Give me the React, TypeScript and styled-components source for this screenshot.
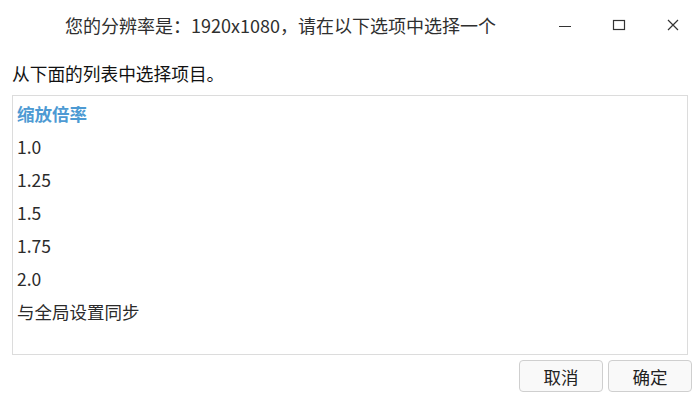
import React from "react";
import styled, { createGlobalStyle } from "styled-components";

const GlobalStyle = createGlobalStyle`
  html, body {
    margin: 0;
    padding: 0;
    background: #ffffff;
  }
  body {
    font-family: "Noto Sans CJK SC", "Noto Sans", sans-serif;
    color: #2b2b2b;
  }
`;

const Window = styled.div`
  box-sizing: border-box;
  width: 700px;
  height: 400px;
  display: flex;
  flex-direction: column;
  background: #fff;
  border-radius: 4px;
  overflow: hidden;
`;

const TitleBar = styled.div`
  height: 52px;
  display: flex;
  align-items: center;
  padding-left: 65px;
  padding-bottom: 2px;
  box-sizing: border-box;
`;

const Title = styled.div`
  flex: 1;
  font-size: 18px;
  color: #2f2f2f;
`;

const Controls = styled.div`
  display: flex;
  align-items: center;
`;

const ControlButton = styled.div`
  width: 54px;
  height: 30px;
  display: flex;
  align-items: center;
  justify-content: center;
  color: #333;
`;

const Body = styled.div`
  flex: 1;
  display: flex;
  flex-direction: column;
  padding: 0 12px;
`;

const Prompt = styled.div`
  font-size: 17.7px;
  color: #111;
  height: 43px;
  line-height: 43px;
`;

const ListBox = styled.div`
  box-sizing: border-box;
  height: 260px;
  border: 1px solid #dcdcdc;
  padding-top: 1px;
`;

const Item = styled.div<{ $header?: boolean }>`
  height: 33px;
  line-height: 33px;
  padding-left: 4px;
  font-size: 17.5px;
  font-weight: ${(p) => (p.$header ? 700 : 400)};
  color: ${(p) => (p.$header ? "#4d9ad3" : "#2b2b2b")};
`;

const Footer = styled.div`
  display: flex;
  justify-content: flex-end;
  gap: 5px;
  padding: 5px 8px 0 0;
  margin-right: -12px;
`;

const Button = styled.button`
  width: 84px;
  height: 32px;
  box-sizing: border-box;
  border: 1px solid #cfcfcf;
  border-radius: 4px;
  background: #f9f9f9;
  font-family: "Noto Sans CJK SC", "Noto Sans", sans-serif;
  font-size: 17.5px;
  color: #222;
  padding: 0;
`;

const items = ["1.0", "1.25", "1.5", "1.75", "2.0", "与全局设置同步"];

export default function App() {
  return (
    <Window>
      <GlobalStyle />
      <TitleBar>
        <Title>您的分辨率是：1920x1080，请在以下选项中选择一个</Title>
        <Controls>
          <ControlButton>
            <svg width="14" height="14" viewBox="0 0 14 14">
              <line x1="1" y1="8.5" x2="13" y2="8.5" stroke="#333" strokeWidth="1.2" />
            </svg>
          </ControlButton>
          <ControlButton>
            <svg width="14" height="14" viewBox="0 0 14 14">
              <rect x="1.5" y="2.5" width="11" height="9" fill="none" stroke="#333" strokeWidth="1.2" />
            </svg>
          </ControlButton>
          <ControlButton>
            <svg width="14" height="14" viewBox="0 0 14 14">
              <path d="M2 2 L12 12 M12 2 L2 12" stroke="#333" strokeWidth="1.2" />
            </svg>
          </ControlButton>
        </Controls>
      </TitleBar>
      <Body>
        <Prompt>从下面的列表中选择项目。</Prompt>
        <ListBox>
          <Item $header>缩放倍率</Item>
          {items.map((it) => (
            <Item key={it}>{it}</Item>
          ))}
        </ListBox>
        <Footer>
          <Button>取消</Button>
          <Button>确定</Button>
        </Footer>
      </Body>
    </Window>
  );
}
